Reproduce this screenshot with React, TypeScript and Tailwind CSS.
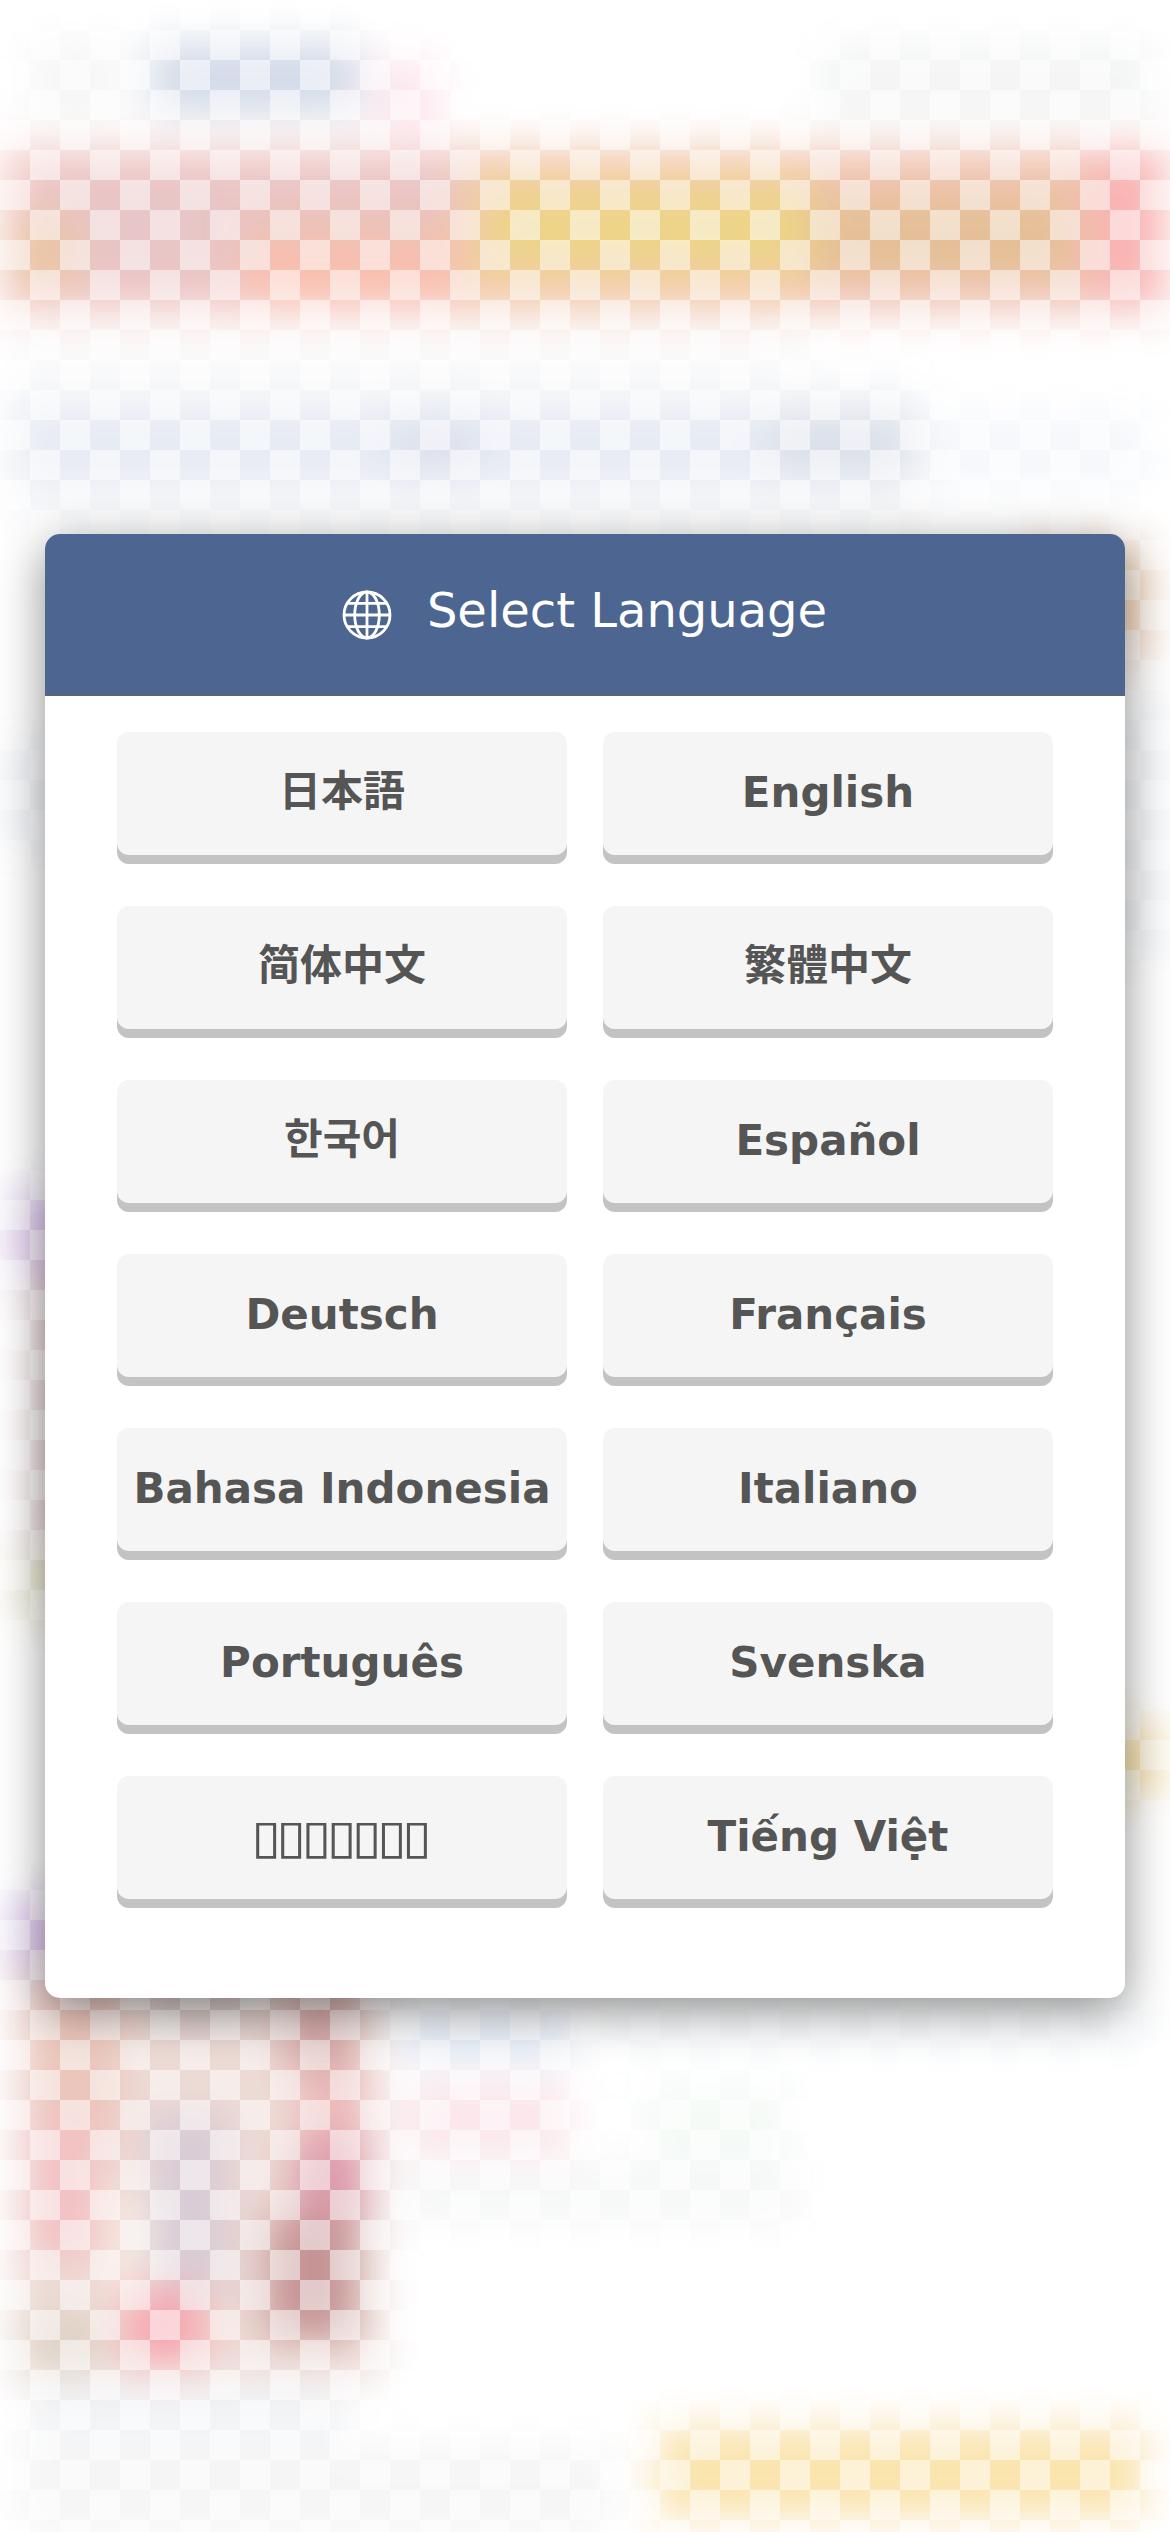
import React from 'react';

interface Patch {
  x: number;
  y: number;
  w: number;
  h: number;
  fill: string;
}

interface Language {
  name: string;
  // what is shown when the label differs from the language's own name
  label?: string;
  cjk?: boolean;
}

const languages: Language[] = [
  { name: '日本語', cjk: true },
  { name: 'English' },
  { name: '简体中文', cjk: true },
  { name: '繁體中文', cjk: true },
  { name: '한국어', cjk: true },
  { name: 'Español' },
  { name: 'Deutsch' },
  { name: 'Français' },
  { name: 'Bahasa Indonesia' },
  { name: 'Italiano' },
  { name: 'Português' },
  { name: 'Svenska' },
  { name: 'ภาษาไทย', label: '▯▯▯▯▯▯▯' },
  { name: 'Tiếng Việt' },
];

// Soft colour patches behind the dialog, painted in order
const patches: Patch[] = [
  // top
  { x: 30, y: 40, w: 90, h: 80, fill: '#f6f6f6' },
  { x: 150, y: 42, w: 210, h: 72, fill: '#cdd6e6' },
  { x: 370, y: 60, w: 70, h: 70, fill: '#fde3ed' },
  { x: 820, y: 45, w: 330, h: 74, fill: '#f3f4f4' },
  // warm band
  { x: 0, y: 145, w: 1170, h: 172, fill: '#f5cbc6' },
  { x: 30, y: 165, w: 430, h: 130, fill: '#e6bfc0' },
  { x: 10, y: 215, w: 65, h: 75, fill: '#e8bf98' },
  { x: 240, y: 210, w: 220, h: 50, fill: '#ecbcae' },
  { x: 240, y: 250, w: 220, h: 52, fill: '#fab8a4' },
  { x: 460, y: 152, w: 360, h: 155, fill: '#f2c7a0' },
  { x: 485, y: 185, w: 325, h: 85, fill: '#ecd07c' },
  { x: 810, y: 155, w: 280, h: 145, fill: '#eebea4' },
  { x: 810, y: 200, w: 260, h: 75, fill: '#e2b98a' },
  { x: 1090, y: 150, w: 70, h: 150, fill: '#f9acac' },
  // blue band
  { x: 20, y: 340, w: 780, h: 30, fill: '#f8f8f8' },
  { x: 10, y: 385, w: 910, h: 130, fill: '#f1f3f7' },
  { x: 20, y: 415, w: 900, h: 60, fill: '#e3e8f3' },
  { x: 390, y: 415, w: 90, h: 60, fill: '#d8deec' },
  { x: 770, y: 415, w: 140, h: 60, fill: '#d6dbe6' },
  { x: 930, y: 410, w: 220, h: 80, fill: '#f5f8fc' },
  // around the dialog
  { x: 1020, y: 545, w: 130, h: 115, fill: '#f5d3b0' },
  { x: 0, y: 740, w: 60, h: 110, fill: '#f2f4f9' },
  { x: 1110, y: 700, w: 60, h: 260, fill: '#f3f6f9' },
  { x: 10, y: 1190, w: 90, h: 90, fill: '#dec4f0' },
  { x: 35, y: 1270, w: 90, h: 280, fill: '#dcbcc0' },
  { x: 20, y: 1550, w: 80, h: 70, fill: '#e6e2c6' },
  { x: 10, y: 1895, w: 90, h: 80, fill: '#dcc0ee' },
  { x: 1105, y: 1725, w: 55, h: 70, fill: '#f8dd8c' },
  // lower left
  { x: 15, y: 1970, w: 365, h: 410, fill: '#ecd8d1' },
  { x: 30, y: 1980, w: 90, h: 160, fill: '#e8c0b2' },
  { x: 30, y: 2110, w: 70, h: 150, fill: '#f2babc' },
  { x: 110, y: 2190, w: 40, h: 110, fill: '#f8ebe2' },
  { x: 150, y: 2110, w: 80, h: 180, fill: '#d5c6d1' },
  { x: 150, y: 1970, w: 110, h: 60, fill: '#cfbfbf' },
  { x: 280, y: 1980, w: 80, h: 90, fill: '#cf9f9d' },
  { x: 300, y: 2070, w: 65, h: 70, fill: '#ebb0b0' },
  { x: 290, y: 2140, w: 80, h: 80, fill: '#da90a4' },
  { x: 265, y: 2215, w: 95, h: 125, fill: '#c08888' },
  { x: 125, y: 2290, w: 80, h: 75, fill: '#f79aa4' },
  { x: 20, y: 2310, w: 80, h: 65, fill: '#dccdc0' },
  // bottom
  { x: 400, y: 2015, w: 170, h: 45, fill: '#dde8f6' },
  { x: 600, y: 2010, w: 550, h: 30, fill: '#f1f5f9' },
  { x: 400, y: 2080, w: 170, h: 75, fill: '#fbe3e8' },
  { x: 640, y: 2080, w: 150, h: 80, fill: '#f5faf7' },
  { x: 400, y: 2165, w: 400, h: 60, fill: '#f6f7f7' },
  { x: 30, y: 2385, w: 310, h: 65, fill: '#f0f3f6' },
  { x: 20, y: 2445, w: 590, h: 90, fill: '#f5f5f6' },
  { x: 655, y: 2425, w: 490, h: 95, fill: '#fae2a4' },
];

const Backdrop: React.FC = () => (
  <div className="absolute inset-0 overflow-hidden">
    <svg viewBox="0 0 1170 2532" className="w-full h-full opacity-90">
      <defs>
        <filter id="soften" filterUnits="userSpaceOnUse" x="-100" y="-100" width="1370" height="2732">
          <feGaussianBlur stdDeviation="21" />
        </filter>
      </defs>
      <g filter="url(#soften)">
        <rect x="-100" y="-100" width="1370" height="2732" fill="#ffffff" />
        {patches.map((p, i) => (
          <rect key={i} x={p.x} y={p.y} width={p.w} height={p.h} fill={p.fill} />
        ))}
      </g>
    </svg>
    {/* Checker veil */}
    <div className="absolute inset-0 bg-[repeating-conic-gradient(transparent_0_25%,#ffffff80_0_50%)] bg-[length:60px_60px]" />
  </div>
);

const GlobeIcon: React.FC = () => (
  <svg viewBox="0 0 48 48" className="w-12 h-12 overflow-visible" fill="none" stroke="currentColor" strokeWidth="2.8">
    <circle cx="24" cy="24" r="23" />
    <ellipse cx="24" cy="24" rx="12.3" ry="23" />
    <path d="M24 1v46M1 24h46M4.5 12.3h39M4.5 35.7h39" />
  </svg>
);

const App: React.FC = () => {
  return (
    <div className="relative w-[1170px] h-[2532px] bg-white flex items-center justify-center font-['DejaVu_Sans','Noto_Sans_CJK_JP',sans-serif]">
      <Backdrop />

      <div className="relative w-[1080px] h-[1464px] rounded-[15px] bg-white overflow-hidden shadow-[0_12px_48px_rgba(0,0,0,0.45)]">
        <header className="flex h-[162px] items-center justify-center gap-9 border-b border-[#62646f] bg-[#4d6591] text-white">
          <GlobeIcon />
          <h1 className="pb-[9px] text-5xl leading-none">Select Language</h1>
        </header>

        <div className="grid grid-cols-2 gap-x-9 gap-y-[51px] px-[72px] pt-9">
          {languages.map(({ name, label, cjk }) => (
            <button
              key={name}
              aria-label={name}
              className={`flex h-[123px] items-center justify-center rounded-xl bg-[#f5f5f5] text-[42px] leading-none font-bold whitespace-nowrap text-[#555] shadow-[0_9px_0_#c3c3c3] ${cjk ? 'pb-[3px]' : 'pb-[2px]'}`}
            >
              {label ? (
                <span className="inline-block scale-x-[1.15] pr-1 text-[47px] font-normal tracking-[-4px]">{label}</span>
              ) : (
                name
              )}
            </button>
          ))}
        </div>
      </div>
    </div>
  );
};

export default App;
